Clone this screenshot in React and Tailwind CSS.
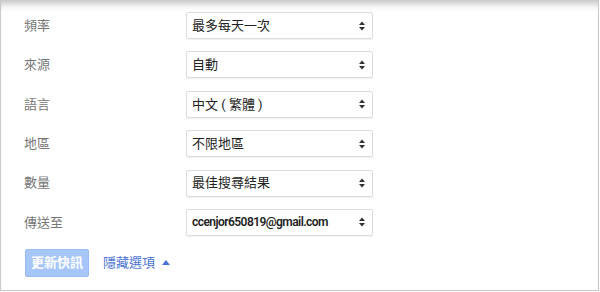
import React from 'react';

const rows = [
  { label: '頻率', value: '最多每天一次' },
  { label: '來源', value: '自動' },
  { label: '語言', value: '中文 ( 繁體 )' },
  { label: '地區', value: '不限地區' },
  { label: '數量', value: '最佳搜尋結果' },
  { label: '傳送至', value: 'ccenjor650819@gmail.com', bold: true },
];

function Arrows() {
  return (
    <svg width="8" height="12" viewBox="0 0 8 12" className="shrink-0">
      <path d="M4 1.5 L7 5 H1 Z" fill="#333" />
      <path d="M4 10.5 L7 7 H1 Z" fill="#333" />
    </svg>
  );
}

export default function App() {
  return (
    <div className="w-[599px] h-[291px] bg-white border-x border-b border-[#c8c8c8] shadow-[inset_0_9px_8px_-6px_rgba(0,0,0,0.28)] font-['Roboto','Noto_Sans_CJK_TC',sans-serif]">
      <div className="pt-[12px] pl-[23px] flex flex-col gap-[12.4px]">
        {rows.map((r) => (
          <div key={r.label} className="flex items-center h-[27px]">
            <div className="w-[162px] text-[13px] text-[#777]">{r.label}</div>
            <div className="w-[187px] h-[27px] border border-[#dcdcdc] rounded-[2px] shadow-[0_1px_1px_rgba(0,0,0,0.06)] flex items-center justify-between pl-[5px] pr-[6px]">
              <span className={r.bold ? 'text-[12px] font-semibold tracking-[-0.55px] text-[#222]' : 'text-[13px] text-[#222]'}>{r.value}</span>
              <Arrows />
            </div>
          </div>
        ))}
      </div>
      <div className="mt-[13px] pl-[24px] flex items-center gap-[14px]">
        <button className="w-[64px] h-[28px] rounded-[2px] bg-[#a6c6fa] border border-[#98bbf5] text-white text-[13px] font-bold">
          更新快訊
        </button>
        <span className="flex items-center gap-[7px] text-[13px] text-[#4a74d6]">
          隱藏選項
          <svg width="8" height="5" viewBox="0 0 8 5">
            <path d="M4 0 L8 5 H0 Z" fill="#4a74d6" />
          </svg>
        </span>
      </div>
    </div>
  );
}
